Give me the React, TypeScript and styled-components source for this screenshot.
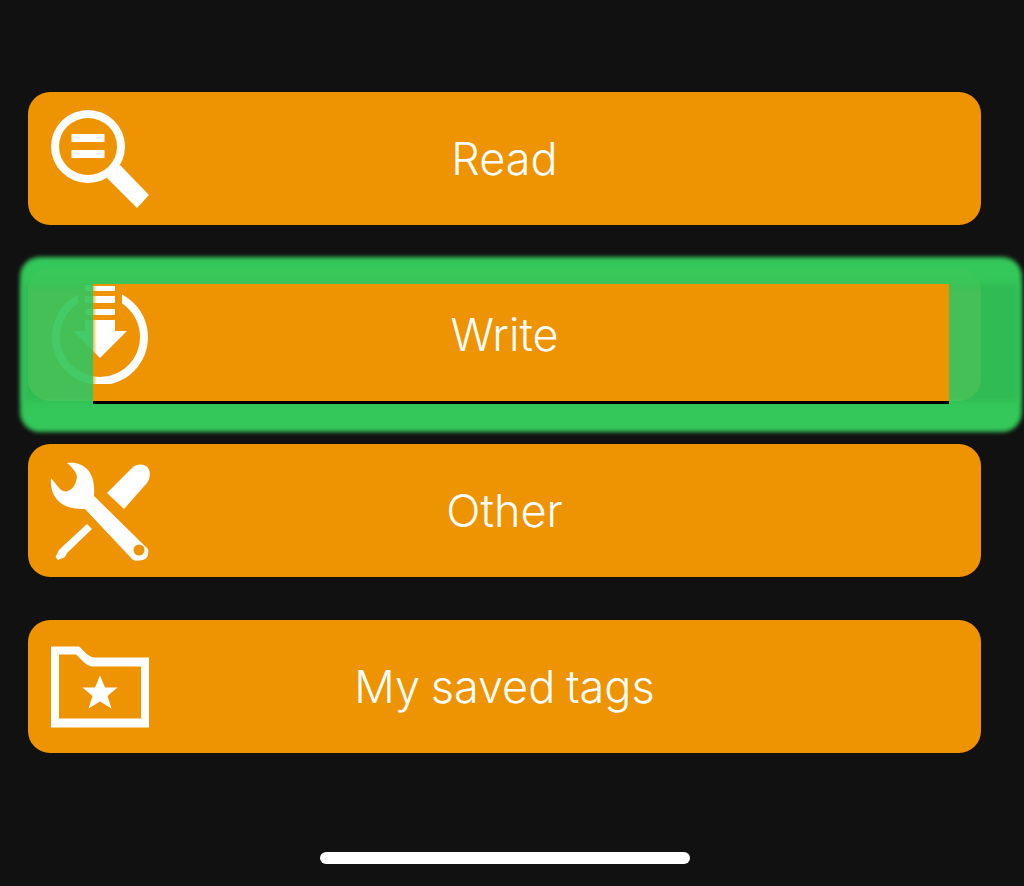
import styled, { createGlobalStyle } from 'styled-components';

const GlobalStyle = createGlobalStyle`
  html, body {
    margin: 0;
    padding: 0;
    background-color: #111111;
  }
`;

const Page = styled.div`
  width: 1024px;
  height: 886px;
  box-sizing: border-box;
  padding: 92px 43px 22px 28px;
  display: flex;
  flex-direction: column;
  overflow: hidden;
  background-color: #111111;
  font-family: 'Inter', 'Liberation Sans', sans-serif;
`;

const MenuList = styled.div`
  display: flex;
  flex-direction: column;
  gap: 43px;
`;

const MenuRow = styled.div`
  position: relative;
`;

const Halo = styled.div`
  position: absolute;
  top: -11px;
  left: -8px;
  right: -41px;
  bottom: -31px;
  border-radius: 20px;
  background-color: #34c759;
  filter: blur(2px);
`;

const HaloBand = styled.div`
  position: absolute;
  top: 16px;
  left: -4px;
  right: -37px;
  bottom: 0;
  background-color: #30bb54;
  filter: blur(3px);
`;

const MenuButton = styled.div<{ $ghost?: boolean }>`
  position: relative;
  height: 133px;
  box-sizing: border-box;
  padding: 0 23px;
  display: grid;
  grid-template-columns: 98px 1fr 98px;
  align-items: center;
  border-radius: 22px;
  background: ${(p) =>
    p.$ghost
      ? 'linear-gradient(to bottom, rgba(120, 210, 90, 0.08) 12px, rgba(120, 205, 90, 0.28) 24px)'
      : '#ee9402'};
`;

const Label = styled.span`
  position: relative;
  z-index: 1;
  grid-column: 2;
  text-align: center;
  color: #ffffff;
  font-size: 45px;
  font-weight: 300;
  word-spacing: -2px;
  line-height: 1;
`;

const Icon = styled.svg<{ $ghost?: boolean }>`
  display: block;
  width: 98px;
  height: 98px;
  overflow: visible;
  fill: ${(p) => (p.$ghost ? '#45ca68' : '#ffffff')};
`;

const Strip = styled.div`
  position: absolute;
  top: 16px;
  left: 65px;
  right: 32px;
  bottom: 0;
  overflow: hidden;
  background-color: #ee9402;
  box-shadow: 0 3px 0 #000000;
`;

const StripIcon = styled.div`
  position: absolute;
  top: 2px;
  left: -42px;
  mask-image: linear-gradient(to right, transparent 40px, #000000 46px);
`;

const HomeIndicator = styled.div`
  align-self: center;
  width: 370px;
  height: 12px;
  margin-top: auto;
  border-radius: 6px;
  background-color: #ffffff;
`;

const ReadIcon = () => (
  <Icon viewBox="51 110 98 98">
    <path
      fillRule="evenodd"
      d="M88 110a37 36.500 0 1 0 0 73a37 36.500 0 1 0 0-73zm0 8a29 28.500 0 1 1 0 57a29 28.500 0 1 1 0-57z"
    />
    <rect x="71.500" y="134" width="33" height="8" />
    <rect x="71.500" y="150" width="33" height="8" />
    <path d="M107 178l13-13 29 30-12 13z" />
  </Icon>
);

const WriteIcon = ({ ghost }: { ghost?: boolean }) => (
  <Icon viewBox="51 286 98 98" $ghost={ghost}>
    <path d="M122 294.500a48 48 0 1 1-44 0v9a40 40 0 1 0 44 0z" />
    <rect x="85" y="285" width="30" height="6" />
    <rect x="85" y="296" width="30" height="7" />
    <rect x="85" y="309" width="30" height="6" />
    <rect x="85" y="320" width="30" height="12" />
    <path d="M73 331h54l-27 27z" />
  </Icon>
);

const OtherIcon = () => (
  <Icon viewBox="51 461 98 98">
    <path
      fillRule="evenodd"
      d="M67 462C73 461 81 462 87 468C93 474 95 484 94 495L148 548C149 552 148 556 145 558C141 560 136 560 133 559L85 508C76 508 68 507 62 503C54 498 50 488 51 477L60 488C62 490 65 491 68 490C73 488 76 483 77 476C77 472 72 466 67 462ZM139 543.500a5.500 5.500 0 1 0 0 11a5.500 5.500 0 1 0 0-11Z"
    />
    <path d="M107 492L132 467C138 462 145 463 148 467C151 471 150 478 147 482L124 508Z" />
    <path d="M87 523L92 528L67 552L65 556L58 559L55.500 556L59 549L62 546Z" />
  </Icon>
);

const SavedIcon = () => (
  <Icon viewBox="51 637.500 98 98">
    <path
      fillRule="evenodd"
      d="M51 646H79C84 650 88 657 95 657H149V727H51ZM59 654V718H141V666H92C85 665 81 658 76 654Z"
    />
    <path d="M100 675l5 12h12.500l-10 8.500 4 12.500-11.500-7-11.500 7 4-12.500-10-8.500h12.500z" />
  </Icon>
);

export default function App() {
  return (
    <Page>
      <GlobalStyle />
      <MenuList>
        <MenuButton>
          <ReadIcon />
          <Label>Read</Label>
        </MenuButton>
        <MenuRow>
          <Halo />
          <HaloBand />
          <MenuButton $ghost>
            <WriteIcon ghost />
            <Strip>
              <StripIcon>
                <WriteIcon />
              </StripIcon>
            </Strip>
            <Label>Write</Label>
          </MenuButton>
        </MenuRow>
        <MenuButton>
          <OtherIcon />
          <Label>Other</Label>
        </MenuButton>
        <MenuButton>
          <SavedIcon />
          <Label>My saved tags</Label>
        </MenuButton>
      </MenuList>
      <HomeIndicator />
    </Page>
  );
}
